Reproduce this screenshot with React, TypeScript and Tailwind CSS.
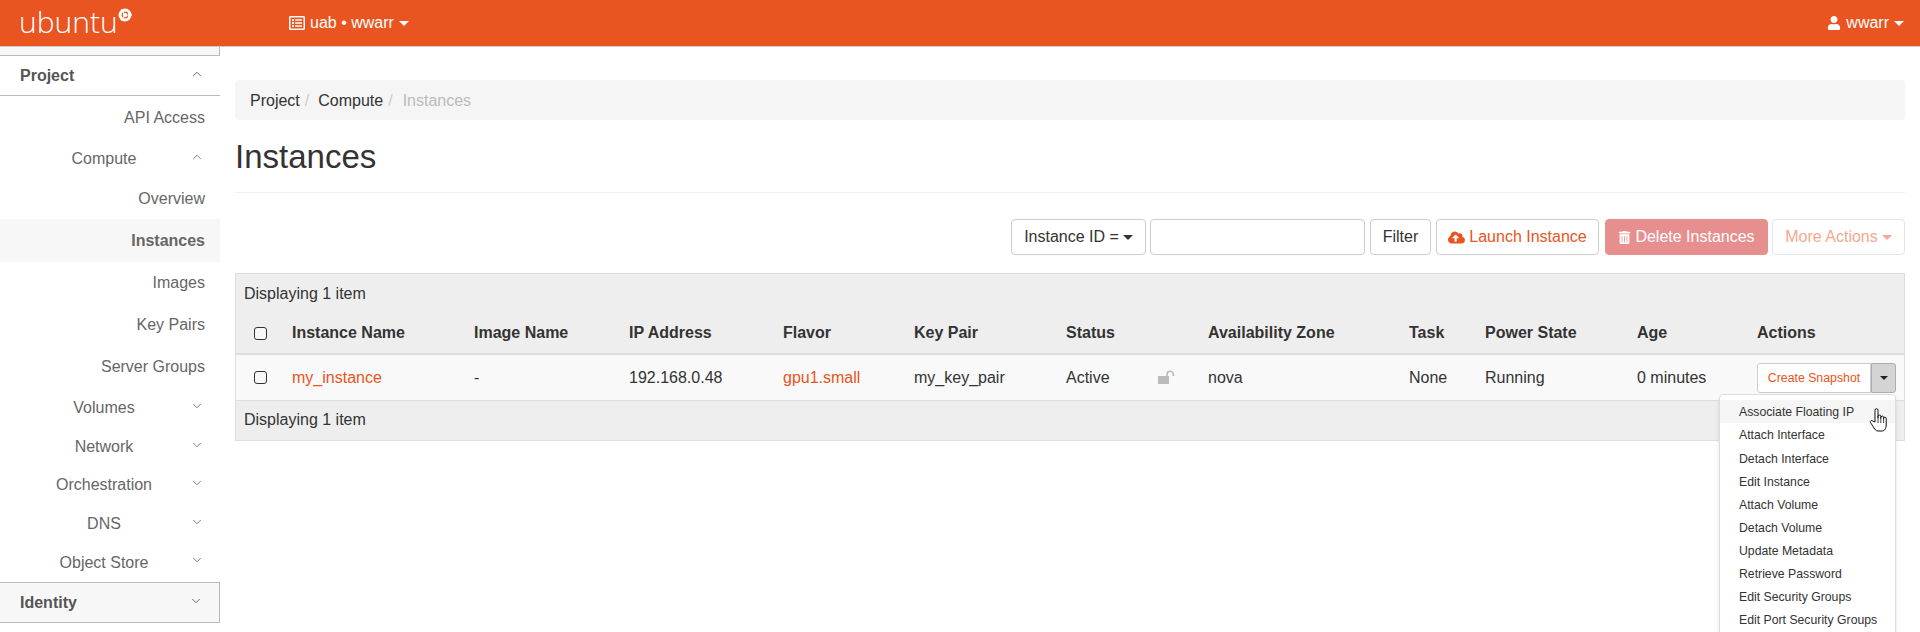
import { ChevronDown, ChevronUp } from "lucide-react";
import { FaCloudUploadAlt, FaRegListAlt, FaTrashAlt, FaUser } from "react-icons/fa";

const menuItems = [
  "Associate Floating IP",
  "Attach Interface",
  "Detach Interface",
  "Edit Instance",
  "Attach Volume",
  "Detach Volume",
  "Update Metadata",
  "Retrieve Password",
  "Edit Security Groups",
  "Edit Port Security Groups",
];

function Caret({ className = "" }: { className?: string }) {
  return <span className={"inline-block w-0 h-0 border-x-[5px] border-x-transparent border-t-[5px] " + className} />;
}

function SubMenu({ label, open, height }: { label: string; open?: boolean; height: string }) {
  return (
    <div className={"flex items-center " + height}>
      <span className="w-[190px] pl-[18px] shrink-0 text-center">{label}</span>
      {open ? (
        <ChevronUp size={14} strokeWidth={1.5} className="-mt-[5px]" />
      ) : (
        <ChevronDown size={14} strokeWidth={1.5} className="-mt-[5px]" />
      )}
    </div>
  );
}

function Leaf({ label, height, active }: { label: string; height: string; active?: boolean }) {
  return (
    <div className={"flex items-center justify-end pr-[15px] " + height + (active ? " bg-[#f7f7f7] font-bold" : "")}>
      {label}
    </div>
  );
}

function Sidebar() {
  return (
    <aside className="w-[220px] shrink-0 text-[16px] text-[#666666]">
      <div className="h-[9px] bg-[#f7f7f7] border-b border-r border-[#bbbbbb]" />
      <div className="h-[40px] flex items-center justify-between pl-[20px] pr-[16px] border-b border-[#bbbbbb] font-bold text-[#555555]">
        <span>Project</span>
        <ChevronUp size={14} strokeWidth={1.5} className="-mt-[4px]" />
      </div>
      <Leaf label="API Access" height="h-[42px] pt-[2px]" />
      <SubMenu label="Compute" height="h-[40px] pt-[2px]" open />
      <Leaf label="Overview" height="h-[41px]" />
      <Leaf label="Instances" height="h-[43px]" active />
      <Leaf label="Images" height="h-[41px]" />
      <Leaf label="Key Pairs" height="h-[42px] pt-[2px]" />
      <Leaf label="Server Groups" height="h-[42px] pt-[2px]" />
      <SubMenu label="Volumes" height="h-[40px] pt-[2px]" />
      <SubMenu label="Network" height="h-[38px] pt-[2px]" />
      <SubMenu label="Orchestration" height="h-[38px] pt-[2px]" />
      <SubMenu label="DNS" height="h-[40px] pt-[2px]" />
      <SubMenu label="Object Store" height="h-[39px]" />
      <div className="h-[41px] flex items-center justify-between pl-[20px] pr-[16px] bg-[#f7f7f7] border-y border-r border-[#bbbbbb] font-bold text-[#555555]">
        <span>Identity</span>
        <ChevronDown size={14} strokeWidth={1.5} className="-mt-[4px]" />
      </div>
    </aside>
  );
}

function Checkbox() {
  return <span className="block w-[13px] h-[13px] border border-[#333333] rounded-[3px] bg-[#f7f7f7]" />;
}

function InstanceTable() {
  return (
    <table className="w-full table-fixed border-collapse text-[16px] text-[#333333]">
      <colgroup>
        <col className="w-[48px]" />
        <col className="w-[182px]" />
        <col className="w-[155px]" />
        <col className="w-[154px]" />
        <col className="w-[131px]" />
        <col className="w-[152px]" />
        <col className="w-[92px]" />
        <col className="w-[50px]" />
        <col className="w-[201px]" />
        <col className="w-[76px]" />
        <col className="w-[152px]" />
        <col className="w-[120px]" />
        <col />
      </colgroup>
      <tbody>
        <tr className="h-[39px] bg-[#eeeeee]">
          <td colSpan={13} className="pl-[8px]">Displaying 1 item</td>
        </tr>
        <tr className="h-[41px] bg-[#eeeeee] border-b-[2px] border-[#dddddd] font-bold">
          <td className="pl-[18px]"><Checkbox /></td>
          <td className="pl-[8px]">Instance Name</td>
          <td className="pl-[8px]">Image Name</td>
          <td className="pl-[8px]">IP Address</td>
          <td className="pl-[8px]">Flavor</td>
          <td className="pl-[8px]">Key Pair</td>
          <td className="pl-[8px]">Status</td>
          <td />
          <td className="pl-[8px]">Availability Zone</td>
          <td className="pl-[8px]">Task</td>
          <td className="pl-[8px]">Power State</td>
          <td className="pl-[8px]">Age</td>
          <td className="pl-[8px]">Actions</td>
        </tr>
        <tr className="h-[46px] bg-[#f9f9f9] border-b border-[#dddddd] [&>td]:pt-[1px]">
          <td className="pl-[18px]"><Checkbox /></td>
          <td className="pl-[8px] text-[#e95420]">my_instance</td>
          <td className="pl-[8px]">-</td>
          <td className="pl-[8px]">192.168.0.48</td>
          <td className="pl-[8px] text-[#e95420]">gpu1.small</td>
          <td className="pl-[8px]">my_key_pair</td>
          <td className="pl-[8px]">Active</td>
          <td className="pl-[8px]">
            <svg width="18" height="14" viewBox="0 0 18 14" className="-mt-[2px]">
              <path d="M9 7V4.5a3.2 3.2 0 0 1 6.4 0V6" fill="none" stroke="#bbbbbb" strokeWidth="1.6" />
              <rect x="0" y="6" width="11" height="8" fill="#bbbbbb" />
            </svg>
          </td>
          <td className="pl-[8px]">nova</td>
          <td className="pl-[8px]">None</td>
          <td className="pl-[8px]">Running</td>
          <td className="pl-[8px]">0 minutes</td>
          <td className="pl-[8px]">
            <div className="flex h-[30px] w-[139px] text-[12.3px]">
              <span className="flex-1 flex items-center justify-center bg-white border border-[#cccccc] rounded-l-[3px] text-[#e95420]">Create Snapshot</span>
              <span className="w-[25px] flex items-center justify-center bg-[#d4d4d4] border border-[#adadad] rounded-r-[3px]">
                <Caret className="border-t-[#222222] !border-x-[4px] !border-t-[4px]" />
              </span>
            </div>
          </td>
        </tr>
        <tr className="h-[40px] bg-[#eeeeee]">
          <td colSpan={13} className="pl-[8px]">Displaying 1 item</td>
        </tr>
      </tbody>
    </table>
  );
}

function ActionMenu() {
  return (
    <div className="absolute left-[1719px] top-[347px] w-[177px] h-[260px] pt-[5px] bg-white border border-[#dddddd] rounded-[4px] shadow-md text-[12.25px] text-[#333333] z-10">
      {menuItems.map((item, i) => (
        <div key={item} className={"h-[23.1px] pt-[2px] flex items-center pl-[19px] " + (i === 0 ? "bg-[#f5f5f5]" : "")}>{item}</div>
      ))}
      <svg className="absolute left-[149px] top-[12px]" width="20" height="26" viewBox="0 0 20 26">
        <path d="M6 15V3.2a1.5 1.5 0 0 1 3 0V11V9.5a1.4 1.4 0 0 1 2.8 0V11.5V10.5a1.4 1.4 0 0 1 2.8 0V12V11.5a1.3 1.3 0 0 1 2.6 0V18c0 3-1.6 6-4 6H9c-2 0-3-1.5-4-3L1.5 15.5c-.8-1.4 1-2.6 2.2-1.5z" fill="#ffffff" stroke="#111111" strokeWidth="1" strokeLinejoin="round" />
        <path d="M9 11v5M11.8 11.5v4.5M14.6 12v4" stroke="#111111" strokeWidth="0.8" fill="none" />
      </svg>
    </div>
  );
}

export default function App() {
  return (
    <div className="h-[632px] overflow-hidden bg-white font-['Liberation_Sans',Arial,sans-serif]">
      <header className="h-[47px] bg-[#e95420] border-b border-[#cccccc] flex items-center text-white text-[16px]">
        <div className="w-[289px] pl-[19px] flex items-start">
          <span className="font-['Open_Sans',sans-serif] font-light text-[30px] leading-[38px] -mt-[3px]">ubuntu</span>
          <svg className="mt-[2px]" width="14" height="14" viewBox="0 0 14 14">
            <circle cx="7" cy="7" r="6.5" fill="#ffffff" />
            <circle cx="7" cy="7" r="2.8" fill="none" stroke="#e95420" strokeWidth="1.2" />
            <path d="M7 7L14 7M7 7L3.5 1M7 7L3.5 13" stroke="#ffffff" strokeWidth="1" />
          </svg>
        </div>
        <div className="flex items-center">
          <FaRegListAlt className="text-[16px] mr-[5px]" />
          <span>uab • wwarr</span>
          <Caret className="ml-[5px] border-t-white" />
        </div>
        <div className="ml-auto flex items-center pr-[16px]">
          <FaUser className="text-[14px] mr-[5px]" />
          <span>wwarr</span>
          <Caret className="ml-[5px] border-t-white" />
        </div>
      </header>
      <div className="flex relative">
        <Sidebar />
        <main className="flex-1 pl-[15px] pr-[15px] pt-[33px] text-[16px] text-[#333333]">
          <div className="h-[40px] flex items-center bg-[#f5f5f5] rounded-[4px] px-[15px] pt-[1px]">
            <span>Project</span>
            <span className="text-[#cccccc] pl-[5px] pr-[9px]">/</span>
            <span>Compute</span>
            <span className="text-[#cccccc] pl-[5px] pr-[10px]">/</span>
            <span className="text-[#bbbbbb]">Instances</span>
          </div>
          <h1 className="text-[33px] leading-[36px] mt-[19px] pb-[17px] border-b border-[#eeeeee]">Instances</h1>
          <div className="flex justify-end mt-[26px] h-[36px]">
            <button className="w-[135px] border border-[#cccccc] rounded-[4px] bg-white flex items-center justify-center">
              Instance ID =<Caret className="ml-[4px] border-t-[#333333]" />
            </button>
            <input className="w-[215px] ml-[4px] border border-[#cccccc] rounded-[4px] bg-white" />
            <button className="w-[61px] ml-[5px] border border-[#cccccc] rounded-[4px] bg-white">Filter</button>
            <button className="w-[163px] ml-[5px] border border-[#cccccc] rounded-[4px] bg-white text-[#e95420] flex items-center justify-center">
              <FaCloudUploadAlt className="text-[17px] mr-[4px]" />Launch Instance
            </button>
            <button className="w-[163px] ml-[6px] border border-[#e59090] rounded-[4px] bg-[#e78f8e] text-white flex items-center justify-center">
              <FaTrashAlt className="text-[13px] mr-[4px]" />Delete Instances
            </button>
            <button className="w-[133px] ml-[4px] border border-[#e6e6e6] rounded-[4px] bg-white text-[#f4a98e] flex items-center justify-center">
              More Actions<Caret className="ml-[4px] border-t-[#f4a98e]" />
            </button>
          </div>
          <div className="mt-[18px] border border-[#dddddd]">
            <InstanceTable />
          </div>
        </main>
        <ActionMenu />
      </div>
    </div>
  );
}
